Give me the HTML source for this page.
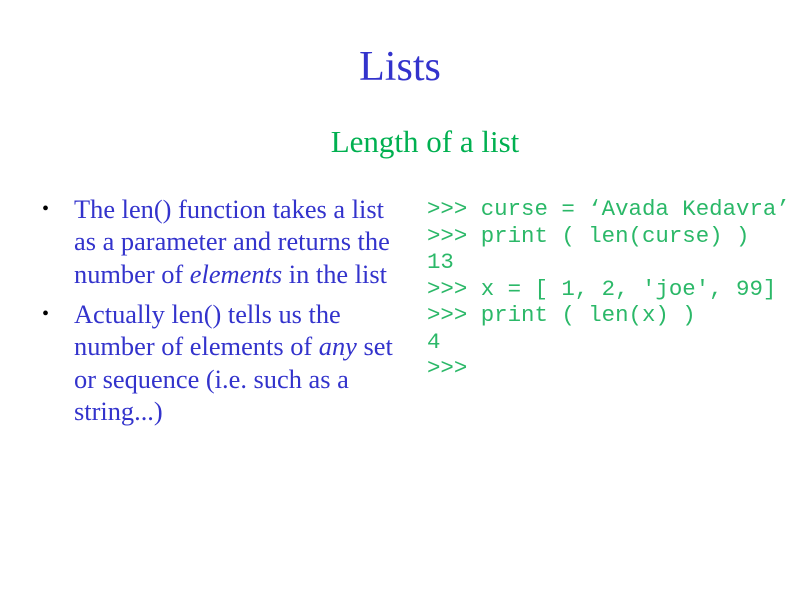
<!DOCTYPE html>
<html><head><meta charset="utf-8"><style>
body{margin:0;width:800px;height:600px;background:#fff;position:relative;overflow:hidden;font-family:"Liberation Serif","Times New Roman",Times,serif}
.t{position:absolute;left:0;width:800px;text-align:center;color:#3333cc;font-size:42px;top:42px;line-height:50px}
.s{position:absolute;left:0;width:850px;text-align:center;color:#00b050;font-size:31px;top:125px;line-height:34px}
.b{position:absolute;left:74px;width:360px;color:#3333cc;font-size:26.4px;line-height:32.3px;white-space:nowrap}
.d{position:absolute;left:-32px;color:#000;font-size:20px}
.c{position:absolute;left:427px;top:196px;font-family:"Liberation Mono","Courier New",Courier,monospace;font-size:22.4px;line-height:26.5px;color:#2bb868;white-space:pre}
</style></head><body>
<div class="t">Lists</div>
<div class="s">Length of a list</div>
<div class="b" style="top:193px"><span class="d">•</span>The len() function takes a list<br>as a parameter and returns the<br>number of <i>elements</i> in the list</div>
<div class="b" style="top:298px"><span class="d">•</span>Actually len() tells us the<br>number of elements of <i>any</i> set<br>or sequence (i.e. such as a<br>string...)</div>
<div class="c">&gt;&gt;&gt; curse = ‘Avada Kedavra’
&gt;&gt;&gt; print ( len(curse) )
13
&gt;&gt;&gt; x = [ 1, 2, 'joe', 99]
&gt;&gt;&gt; print ( len(x) )
4
&gt;&gt;&gt;</div>
</body></html>
